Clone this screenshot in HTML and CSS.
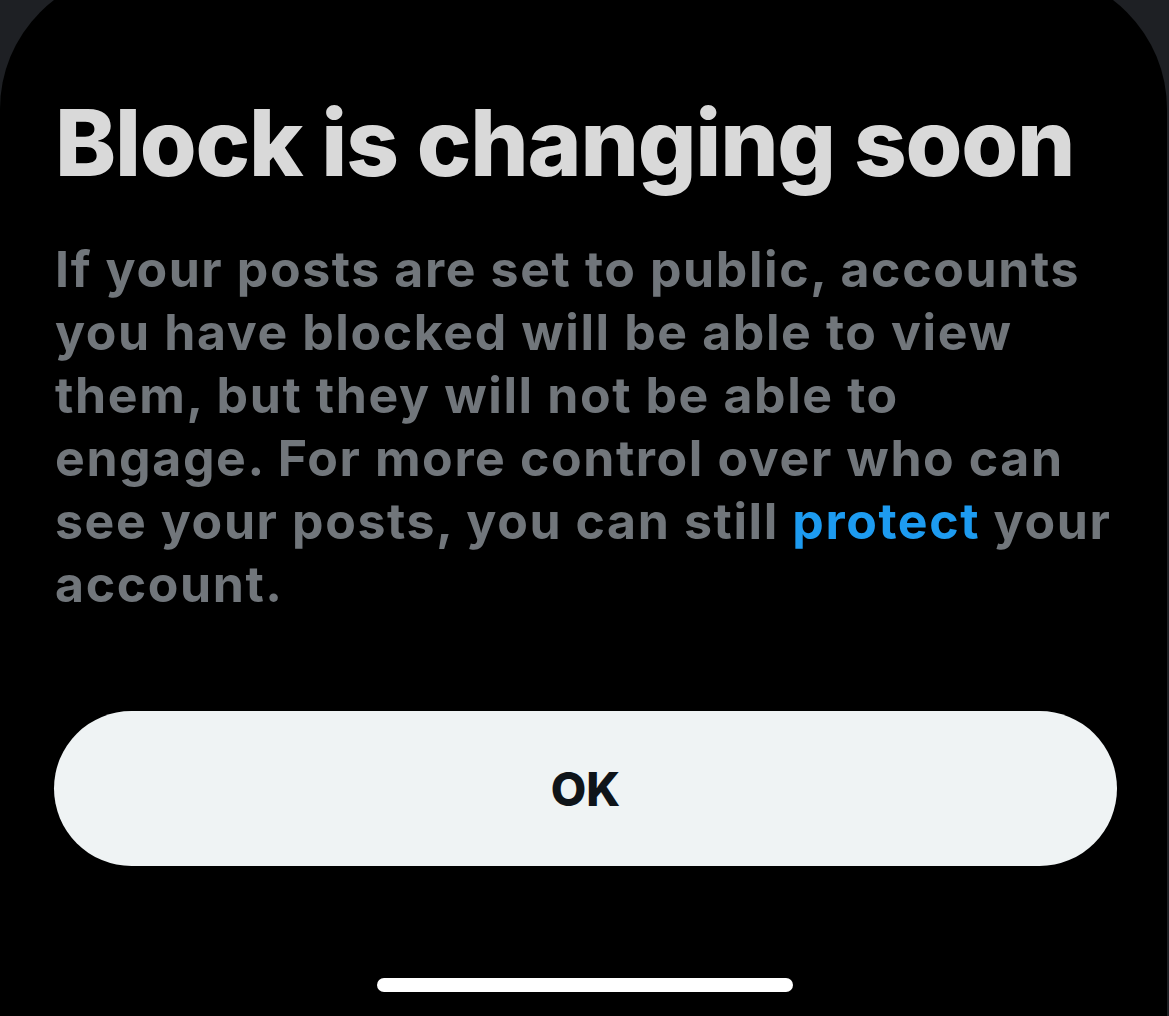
FILE: index.html
```html
<!DOCTYPE html>
<html lang="en">
<head>
<meta charset="utf-8">
<title>Block is changing soon</title>
<link rel="stylesheet" href="styles.css">
</head>
<body>
<div class="sheet">
  <h1 class="title">Block is changing soon</h1>
  <p class="body">If your posts are set to public, accounts you have blocked will be able to view them, but they will not be able to engage. For more control over who can see your posts, you can still <a class="link" href="#">protect</a> your account.</p>
  <button class="ok">OK</button>
  <div class="home-bar"></div>
</div>
</body>
</html>
```

FILE: styles.css
```css
html, body {
  margin: 0;
  padding: 0;
  height: 100%;
  background: #1e2024;
  overflow: hidden;
}

.sheet {
  box-sizing: border-box;
  margin-top: -28px;
  margin-right: 2px;
  height: 1060px;
  background: #000;
  border-radius: 137px 137px 0 0;
  padding: 116px 50px 0 55px;
  display: flex;
  flex-direction: column;
  font-family: Inter, "Noto Sans", sans-serif;
}

.title {
  margin: 0;
  color: #d9d9d9;
  font-size: 92px;
  font-weight: 800;
  line-height: 110px;
  letter-spacing: -1.2px;
}

.body {
  margin: 40px 0 0;
  color: #71767b;
  font-size: 50px;
  font-weight: 700;
  line-height: 63px;
  letter-spacing: 1.6px;
}

.link {
  color: #1d9bf0;
  text-decoration: none;
}

.ok {
  margin: 95px 0 0 -1px;
  height: 155px;
  border: 0;
  border-radius: 78px;
  background: #eff3f4;
  color: #0f1419;
  font-family: Inter, "Noto Sans", sans-serif;
  font-size: 46px;
  font-weight: 800;
  cursor: pointer;
}

.home-bar {
  align-self: center;
  margin: 112px 0 0 -2px;
  width: 416px;
  height: 14px;
  border-radius: 7px;
  background: #fff;
}
```
